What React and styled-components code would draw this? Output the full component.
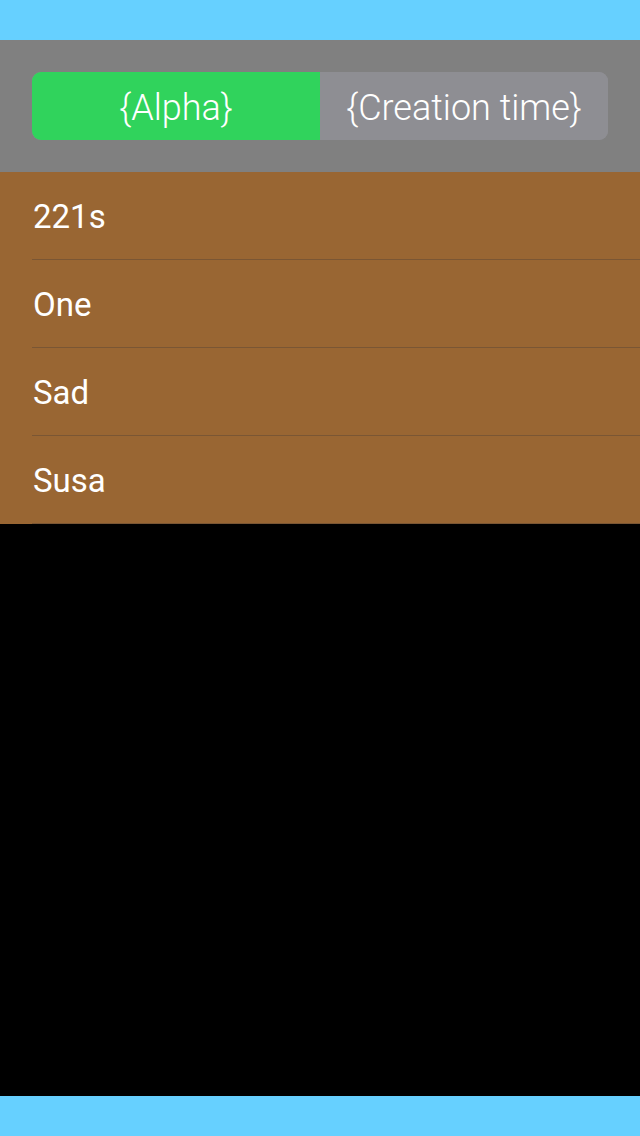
import React, { useState } from "react";
import styled, { createGlobalStyle } from "styled-components";

const GlobalStyle = createGlobalStyle`
  html, body {
    margin: 0;
    padding: 0;
    background: #000;
  }
  body {
    font-family: Roboto, "Liberation Sans", sans-serif;
  }
`;

const items = ["221s", "One", "Sad", "Susa"];
const tabs = ["{Alpha}", "{Creation time}"];

const App = () => {
  const [selected, setSelected] = useState(0);

  return (
    <Screen>
      <GlobalStyle />
      <StatusBar />
      <Header>
        <Segmented>
          {tabs.map((tab, idx) => (
            <Segment key={tab} active={idx === selected} onClick={() => setSelected(idx)}>
              {tab}
            </Segment>
          ))}
        </Segmented>
      </Header>
      <List>
        {items.map((item) => (
          <Row key={item}>
            <RowText>{item}</RowText>
          </Row>
        ))}
      </List>
      <Empty />
      <BottomBar />
    </Screen>
  );
};

export default App;

const Screen = styled.div`
  width: 640px;
  height: 1136px;
  display: flex;
  flex-direction: column;
  background: #000;
`;

const StatusBar = styled.div`
  height: 40px;
  background: #66d0ff;
  flex-shrink: 0;
`;

const Header = styled.div`
  height: 132px;
  background: #808080;
  padding: 32px;
  box-sizing: border-box;
  flex-shrink: 0;
`;

const Segmented = styled.div`
  display: grid;
  grid-template-columns: 1fr 1fr;
  height: 68px;
  border-radius: 9px;
  overflow: hidden;
  background: #8e8e93;
`;

const Segment = styled.div`
  display: flex;
  align-items: center;
  justify-content: center;
  padding-top: 3px;
  background: ${(props) => (props.active ? "#30d35c" : "#8e8e93")};
  color: #fff;
  font-size: 36px;
  font-weight: 300;
  cursor: pointer;
`;

const List = styled.div`
  background: #996633;
  flex-shrink: 0;
`;

const Row = styled.div`
  height: 88px;
  margin-left: 32px;
  padding-top: 2px;
  border-bottom: 1px solid #7a5634;
  box-sizing: border-box;
  display: flex;
  align-items: center;
`;

const RowText = styled.span`
  color: #fff;
  font-size: 33px;
  padding-left: 1px;
`;

const Empty = styled.div`
  flex: 1;
  background: #000;
`;

const BottomBar = styled.div`
  height: 40px;
  background: #66d0ff;
  flex-shrink: 0;
`;
